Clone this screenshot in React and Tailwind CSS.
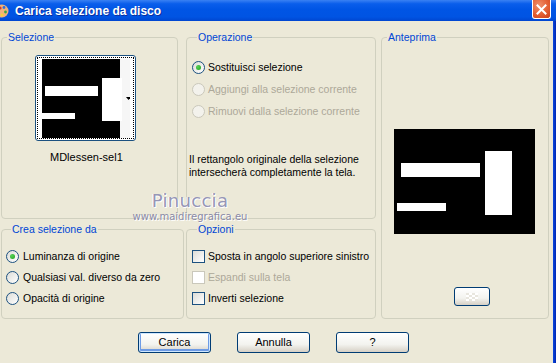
import React from 'react'

function Legend({ children }) {
  return (
    <legend className="ml-[5px] px-[1px] leading-[13px] text-[#0046D5]">{children}</legend>
  )
}

function Radio({ checked, disabled, children }) {
  return (
    <div className="flex items-center h-[21px] whitespace-nowrap">
      <span
        className={
          disabled
            ? 'w-[13px] h-[13px] shrink-0 rounded-full border border-[#CAC8BB] bg-[#F3F2EC]'
            : 'w-[13px] h-[13px] shrink-0 rounded-full border border-[#1C5180] bg-[linear-gradient(135deg,#DCDCD7,#FFFFFF)] flex items-center justify-center'
        }
      >
        {checked && <span className="w-[5px] h-[5px] rounded-full bg-[radial-gradient(circle_at_35%_35%,#55D155,#21A121)]" />}
      </span>
      <span className={disabled ? 'ml-[4px] text-[#ACA899]' : 'ml-[4px] text-black'}>{children}</span>
    </div>
  )
}

function Checkbox({ disabled, children }) {
  return (
    <div className="flex items-center h-[21px] whitespace-nowrap">
      <span
        className={
          disabled
            ? 'w-[13px] h-[13px] shrink-0 border border-[#CAC8BB] bg-white'
            : 'w-[13px] h-[13px] shrink-0 border border-[#1C5180] bg-[linear-gradient(135deg,#DCDCD7,#FFFFFF)]'
        }
      />
      <span className={disabled ? 'ml-[3px] text-[#ACA899]' : 'ml-[3px] text-black'}>{children}</span>
    </div>
  )
}

function Button({ primary, children }) {
  return (
    <button
      className={
        primary
          ? 'w-[73px] h-[21px] rounded-[3px] border border-[#003C74] bg-[linear-gradient(to_bottom,#FFFFFF,#F3F3EF_60%,#D6D0C5)] shadow-[inset_0_0_0_1px_#CEE7FF,inset_0_-1px_0_2px_#6E9BE5] text-black text-[11px] leading-[13px]'
          : 'w-[73px] h-[21px] rounded-[3px] border border-[#003C74] bg-[linear-gradient(to_bottom,#FFFFFF,#F3F3EF_60%,#D6D0C5)] text-black text-[11px] leading-[13px]'
      }
    >
      {children}
    </button>
  )
}

function Thumb() {
  return (
    <svg width="88" height="79" viewBox="0 0 88 79">
      <rect x="0" y="0" width="78" height="79" fill="#000" />
      <rect x="78" y="0" width="10" height="79" fill="#F6F6F6" />
      <rect x="3" y="27" width="53" height="10" fill="#fff" />
      <rect x="0" y="54" width="33" height="6" fill="#fff" />
      <rect x="60" y="19" width="20" height="43" fill="#fff" />
      <polygon points="84,38 89,38 86.5,41" fill="#000" />
    </svg>
  )
}

function Preview() {
  return (
    <svg width="141" height="105" viewBox="0 0 141 105">
      <rect x="0" y="0" width="141" height="105" fill="#000" />
      <rect x="7" y="34" width="79" height="14" fill="#fff" />
      <rect x="3" y="74" width="49" height="8" fill="#fff" />
      <rect x="91" y="22" width="27" height="64" fill="#fff" />
    </svg>
  )
}

export default function App() {
  return (
    <div className="relative w-[556px] h-[363px] overflow-hidden bg-[#ECE9D8] font-['Liberation_Sans',Arial,sans-serif] text-[10.5px] leading-[13px] text-black">
      {/* title bar */}
      <div className="h-[21px] flex items-center bg-[linear-gradient(to_bottom,#3A81F3_0%,#0A5EEB_18%,#0055E5_45%,#0054E3_80%,#0046D0_100%)]">
        <svg width="10" height="16" viewBox="0 0 10 16" className="shrink-0">
          <circle cx="2" cy="8" r="6.5" fill="#F2B27A" />
          <circle cx="0" cy="5" r="1.6" fill="#D8382E" />
          <circle cx="4" cy="4.5" r="1.4" fill="#2C6FE0" />
          <circle cx="5.5" cy="9" r="1.4" fill="#39A943" />
          <circle cx="2" cy="12" r="1.4" fill="#F4D23A" />
        </svg>
        <span className="ml-[5px] text-white font-bold text-[12px] leading-[14px] [text-shadow:1px_1px_0_#0A2FA0]">
          Carica selezione da disco
        </span>
        <div className="ml-auto mr-[5px] self-start w-[19px] h-[19px] rounded-b-[3px] border border-t-0 border-white bg-[radial-gradient(circle_at_35%_30%,#F0906C,#E15A2E_60%,#C8401C)] flex items-center justify-center">
          <svg width="11" height="11" viewBox="0 0 11 11">
            <path d="M1.5 1.5 L9.5 9.5 M9.5 1.5 L1.5 9.5" stroke="#fff" strokeWidth="2" strokeLinecap="square" />
          </svg>
        </div>
      </div>

      <div className="flex h-[342px]">
        <div className="w-[553px] flex flex-col">
          <div className="flex mt-[10px]">
            {/* left column */}
            <div className="ml-[1px] w-[183px] flex flex-col">
              <fieldset className="w-[177px] h-[188px] border border-[#D0D0BF] rounded-[4px] min-w-0">
                <Legend>Selezione</Legend>
                <div className="ml-[33px] mt-[11px] w-[101px] h-[86px] rounded-[3px] border border-[#1C5180] bg-white p-[1px]">
                  <div className="h-full border border-dotted border-black flex items-center pl-[4px]">
                    <Thumb />
                  </div>
                </div>
                <div className="mt-[10px] ml-[48px] text-[11px]">MDlessen-sel1</div>
              </fieldset>
              <fieldset className="mt-[4px] w-[183px] h-[96px] border border-[#D0D0BF] rounded-[4px] min-w-0 pl-[4px]">
                <Legend>Crea selezione da</Legend>
                <div className="mt-[10px]">
                  <Radio checked>Luminanza di origine</Radio>
                  <Radio>Qualsiasi val. diverso da zero</Radio>
                  <Radio>Opacità di origine</Radio>
                </div>
              </fieldset>
            </div>

            {/* middle column */}
            <div className="ml-[2px] w-[190px] flex flex-col">
              <fieldset className="w-[190px] h-[188px] border border-[#D0D0BF] rounded-[4px] min-w-0 pl-[5px]">
                <Legend>Operazione</Legend>
                <div className="mt-[12px] whitespace-nowrap">
                  <div className="flex items-center h-[22px]">
                    <span className="w-[13px] h-[13px] shrink-0 rounded-full border border-[#1C5180] bg-[linear-gradient(135deg,#DCDCD7,#FFFFFF)] flex items-center justify-center">
                      <span className="w-[5px] h-[5px] rounded-full bg-[radial-gradient(circle_at_35%_35%,#55D155,#21A121)]" />
                    </span>
                    <span className="ml-[3px]">Sostituisci selezione</span>
                  </div>
                  <div className="flex items-center h-[22px]">
                    <span className="w-[13px] h-[13px] shrink-0 rounded-full border border-[#CAC8BB] bg-[#F3F2EC]" />
                    <span className="ml-[3px] text-[#ACA899]">Aggiungi alla selezione corrente</span>
                  </div>
                  <div className="flex items-center h-[22px]">
                    <span className="w-[13px] h-[13px] shrink-0 rounded-full border border-[#CAC8BB] bg-[#F3F2EC]" />
                    <span className="ml-[3px] text-[#ACA899]">Rimuovi dalla selezione corrente</span>
                  </div>
                </div>
                <p className="mt-[31px] -ml-[3px] whitespace-nowrap">
                  Il rettangolo originale della selezione
                  <br />
                  intersecherà completamente la tela.
                </p>
              </fieldset>
              <fieldset className="mt-[4px] w-[190px] h-[96px] border border-[#D0D0BF] rounded-[4px] min-w-0 pl-[5px]">
                <Legend>Opzioni</Legend>
                <div className="mt-[10px]">
                  <Checkbox>Sposta in angolo superiore sinistro</Checkbox>
                  <Checkbox disabled>Espandi sulla tela</Checkbox>
                  <Checkbox>Inverti selezione</Checkbox>
                </div>
              </fieldset>
            </div>

            {/* right column */}
            <fieldset className="ml-[5px] w-[168px] h-[288px] border border-[#D0D0BF] rounded-[4px] min-w-0 flex flex-col items-center">
              <Legend>Anteprima</Legend>
              <div className="mt-[85px] -ml-[2px]">
                <Preview />
              </div>
              <div className="mt-[53px] ml-[14px] w-[36px] h-[19px] rounded-[3px] border border-[#003C74] bg-[linear-gradient(to_bottom,#FFFFFF,#F3F3EF_60%,#D6D0C5)] flex items-center justify-center">
                <div className="w-[12px] h-[8px] bg-[conic-gradient(#fff_25%,#E8E6DE_0_50%,#fff_0_75%,#E8E6DE_0)] bg-[length:6px_4px]" />
              </div>
            </fieldset>
          </div>

          {/* buttons */}
          <div className="mt-[13px] ml-[138px] flex gap-[26px]">
            <Button primary>Carica</Button>
            <Button>Annulla</Button>
            <Button>?</Button>
          </div>
        </div>
        <div className="w-[3px] bg-[linear-gradient(to_right,#0A48E0,#0026B0)]" />
      </div>

      {/* watermark */}
      <div className="absolute left-[120px] top-[191px] w-[140px] flex flex-col items-center pointer-events-none font-['DejaVu_Sans',sans-serif]">
        <span className="text-[18px] leading-[20px] tracking-[0.3px] text-[#9696B6] [text-shadow:1px_1px_0_#fff,-1px_0_0_#fff]">
          Pinuccia
        </span>
        <span className="text-[10px] leading-[12px] text-[#8A8AA6] [text-shadow:1px_1px_0_#fff]">
          www.maidiregrafica.eu
        </span>
      </div>
    </div>
  )
}
